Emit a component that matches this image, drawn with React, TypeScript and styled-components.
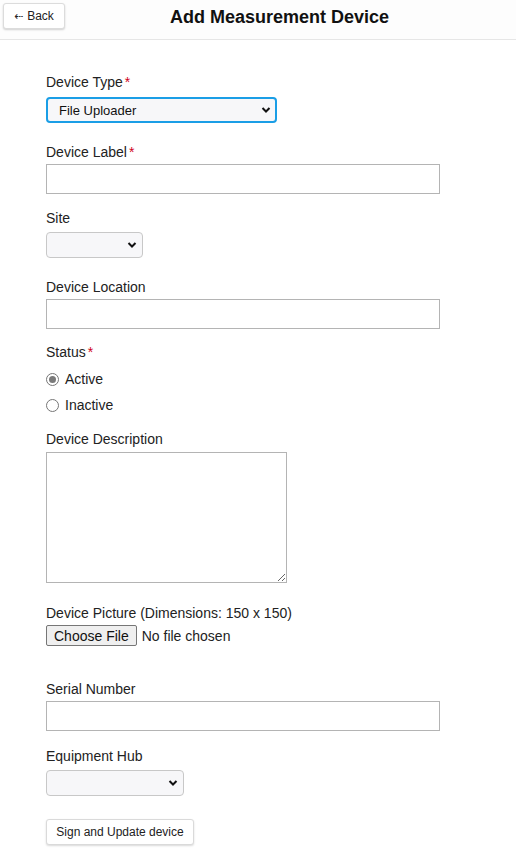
import React from "react";
import styled, { createGlobalStyle } from "styled-components";

const Global = createGlobalStyle`
  html, body { margin: 0; padding: 0; background: #ffffff; }
  body { font-family: Arial, "Liberation Sans", Helvetica, sans-serif; color: #222; }
  * { box-sizing: border-box; }
`;

const Header = styled.header`
  display: flex;
  align-items: flex-start;
  height: 40px;
  padding: 3px 22px 0 3px;
  background: #fdfdfd;
  border-bottom: 1px solid #e6e6e6;
`;

const BackButton = styled.button`
  height: 26px;
  width: 62px;
  padding: 0 6px;
  background: #fff;
  border: 1px solid #dcdcdc;
  border-radius: 3px;
  box-shadow: 0 1px 2px rgba(0, 0, 0, 0.18);
  font-family: Arial, "Liberation Sans", sans-serif;
  font-size: 12px;
  color: #222;
  display: flex;
  align-items: center;
  justify-content: center;
  gap: 3px;
`;

const Arrow = styled.span`
  font-size: 12px;
  font-family: "DejaVu Sans", sans-serif;
  transform: scaleX(0.9);
`;

const Title = styled.h1`
  flex: 1;
  margin: 3px 0 0;
  text-align: center;
  font-size: 18px;
  line-height: 22px;
  font-weight: bold;
  color: #111;
`;

const Form = styled.form`
  padding: 34px 0 20px 46px;
  display: flex;
  flex-direction: column;
`;

const Group = styled.div<{ $after?: number }>`
  display: flex;
  flex-direction: column;
  align-items: flex-start;
  margin-bottom: ${(p) => p.$after ?? 16}px;
`;

const Label = styled.label`
  font-size: 14px;
  line-height: 16px;
  color: #222;
  margin-bottom: 4px;
`;

const Req = styled.span`
  color: #d0021b;
  margin-left: 2px;
`;

const TextInput = styled.input`
  width: 394px;
  height: 30px;
  border: 1px solid #b4b4b4;
  background: #fff;
  margin: 0;
  font-size: 14px;
  padding: 0 6px;
  outline: none;
`;

const SelectWrap = styled.div<{ $w: number; $mt: number }>`
  position: relative;
  width: ${(p) => p.$w}px;
  height: 26px;
  margin: ${(p) => p.$mt}px 0 4px;
`;

const Select = styled.select<{ $focus?: boolean }>`
  appearance: none;
  width: 100%;
  height: 100%;
  background: #f7f7f9;
  border: ${(p) => (p.$focus ? "2px solid #1a9ee6" : "1px solid #c8c8c8")};
  border-radius: 4px;
  font-family: Arial, "Liberation Sans", sans-serif;
  font-size: 13px;
  color: #111;
  padding: 0 0 0 ${(p) => (p.$focus ? 11 : 12)}px;
  outline: none;
`;

const Chevron = styled.svg`
  position: absolute;
  right: 6px;
  top: 9px;
  pointer-events: none;
`;

const RadioRow = styled.label`
  display: flex;
  align-items: center;
  height: 26px;
  font-size: 14px;
  color: #222;
  gap: 6px;
`;

const RadioDot = styled.span<{ $on?: boolean }>`
  width: 13px;
  height: 13px;
  border-radius: 50%;
  border: 1px solid #767676;
  background: #fff;
  display: flex;
  align-items: center;
  justify-content: center;
  &::after {
    content: "";
    width: 7px;
    height: 7px;
    border-radius: 50%;
    background: ${(p) => (p.$on ? "#7a7a7a" : "transparent")};
  }
`;

const Radios = styled.div`
  display: flex;
  flex-direction: column;
  margin-top: 2px;
`;

const TextArea = styled.textarea`
  display: block;
  width: 241px;
  height: 131px;
  margin-top: 1px;
  border: 1px solid #b4b4b4;
  background: #fff;
  outline: none;
  font-size: 13px;
`;

const FileRow = styled.div`
  display: flex;
  align-items: center;
  gap: 5px;
  font-size: 14px;
  color: #222;
`;

const FileButton = styled.span`
  height: 21px;
  padding: 0 7px;
  display: flex;
  align-items: center;
  background: #efefef;
  border: 1px solid #767676;
  border-radius: 2px;
  font-size: 14px;
  color: #111;
`;

const SubmitButton = styled.button`
  align-self: flex-start;
  margin-top: 4px;
  height: 26px;
  width: 148px;
  background: #fff;
  border: 1px solid #dadada;
  border-radius: 3px;
  box-shadow: 0 1px 2px rgba(0, 0, 0, 0.15);
  font-family: Arial, "Liberation Sans", sans-serif;
  font-size: 12px;
  color: #222;
`;

const Caret = () => (
  <Chevron width="10" height="8" viewBox="0 0 10 8">
    <path d="M1.5 2 L5 5.5 L8.5 2" fill="none" stroke="#111" strokeWidth="2" />
  </Chevron>
);

export default function App() {
  return (
    <>
      <Global />
      <Header>
        <BackButton type="button">
          <Arrow>⇠</Arrow> Back
        </BackButton>
        <Title>Add Measurement Device</Title>
      </Header>
      <Form onSubmit={(e) => e.preventDefault()}>
        <Group $after={17}>
          <Label>
            Device Type<Req>*</Req>
          </Label>
          <SelectWrap $w={231} $mt={3}>
            <Select $focus defaultValue="fu">
              <option value="fu">File Uploader</option>
            </Select>
            <Caret />
          </SelectWrap>
        </Group>
        <Group>
          <Label>
            Device Label<Req>*</Req>
          </Label>
          <TextInput type="text" />
        </Group>
        <Group $after={17}>
          <Label>Site</Label>
          <SelectWrap $w={97} $mt={2}>
            <Select>
              <option value=""></option>
            </Select>
            <Caret />
          </SelectWrap>
        </Group>
        <Group $after={15}>
          <Label>Device Location</Label>
          <TextInput type="text" />
        </Group>
        <Group $after={13}>
          <Label>
            Status<Req>*</Req>
          </Label>
          <Radios>
            <RadioRow>
              <RadioDot $on /> Active
            </RadioRow>
            <RadioRow>
              <RadioDot /> Inactive
            </RadioRow>
          </Radios>
        </Group>
        <Group $after={22}>
          <Label>Device Description</Label>
          <TextArea />
        </Group>
        <Group $after={35}>
          <Label>Device Picture (Dimensions: 150 x 150)</Label>
          <FileRow>
            <FileButton>Choose File</FileButton>
            No file chosen
          </FileRow>
        </Group>
        <Group $after={17}>
          <Label>Serial Number</Label>
          <TextInput type="text" />
        </Group>
        <Group $after={15}>
          <Label>Equipment Hub</Label>
          <SelectWrap $w={138} $mt={2}>
            <Select>
              <option value=""></option>
            </Select>
            <Caret />
          </SelectWrap>
        </Group>
        <SubmitButton type="submit">Sign and Update device</SubmitButton>
      </Form>
    </>
  );
}
